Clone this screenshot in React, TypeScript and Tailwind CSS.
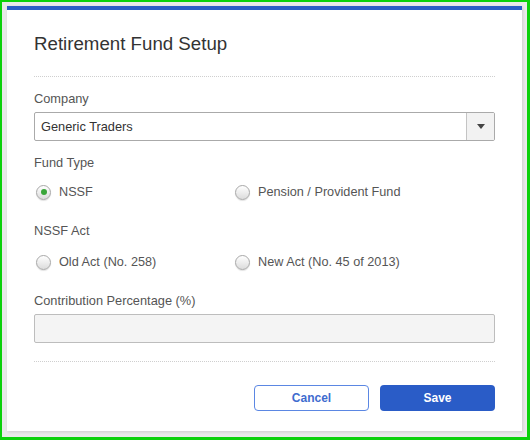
import React from "react";

function Radio({ checked }: { checked?: boolean }) {
  return (
    <span className="relative ml-[2px] inline-flex h-[15px] w-[15px] shrink-0 items-center justify-center rounded-full border border-[#a8a8a8] bg-gradient-to-b from-[#ffffff] to-[#dcdcdc] shadow-[0_1px_1px_rgba(0,0,0,0.12)]">
      {checked && <span className="h-[6px] w-[6px] rounded-full bg-[#3aa63a]" />}
    </span>
  );
}

function RadioItem({ label, checked }: { label: string; checked?: boolean }) {
  return (
    <div className="flex h-[18px] items-center gap-[8px]">
      <Radio checked={checked} />
      <span className="text-[12.7px] leading-[18px] text-[#555]">{label}</span>
    </div>
  );
}

export default function App() {
  return (
    <div
      className="h-[440px] w-[530px] border-b-[3px] border-l-2 border-r-[3px] border-t-2 border-[#0bd10b] bg-[#e9e9e9] pb-[6px] pl-[5px] pr-[5px] pt-[4px]"
      style={{ fontFamily: '"Liberation Sans", Arial, sans-serif' }}
    >
      <div className="flex h-full w-full flex-col bg-white shadow-[1px_1px_3px_rgba(0,0,0,0.12)]">
        <div className="h-[4px] w-full bg-[#2b5ec6]" />
        <div className="flex flex-1 flex-col px-[27px]">
          <h1 className="mt-[22px] text-[18.7px] leading-[24px] text-[#333]">Retirement Fund Setup</h1>
          <div className="mt-[20px] border-t border-dotted border-[#cfcfcf]" />

          <div className="mt-[13px] text-[12.8px] leading-[18px] text-[#555]">Company</div>
          <div className="mt-[4px] flex h-[29px] items-stretch overflow-hidden rounded-[2px] border border-[#aaaaaa] bg-white">
            <div className="flex flex-1 items-center pl-[6px] text-[12.8px] text-[#333]">Generic Traders</div>
            <div className="flex w-[28px] items-center justify-center border-l border-[#c4c4c4] bg-[#f2f2f2]">
              <span className="h-0 w-0 border-l-[4px] border-r-[4px] border-t-[5px] border-l-transparent border-r-transparent border-t-[#444]" />
            </div>
          </div>

          <div className="mt-[13px] text-[12.8px] leading-[18px] text-[#555]">Fund Type</div>
          <div className="mt-[11px] grid grid-cols-[199px_1fr]">
            <RadioItem label="NSSF" checked />
            <RadioItem label="Pension / Provident Fund" />
          </div>

          <div className="mt-[21px] text-[12.8px] leading-[18px] text-[#555]">NSSF Act</div>
          <div className="mt-[13px] grid grid-cols-[199px_1fr]">
            <RadioItem label="Old Act (No. 258)" />
            <RadioItem label="New Act (No. 45 of 2013)" />
          </div>

          <div className="mt-[21px] text-[12.8px] leading-[18px] text-[#555]">Contribution Percentage (%)</div>
          <div className="mt-[4px] h-[29px] rounded-[2px] border border-[#bdbdbd] bg-[#f4f4f4]" />

          <div className="mt-[18px] border-t border-dotted border-[#cfcfcf]" />

          <div className="mt-[23px] flex justify-end gap-[11px]">
            <button className="h-[26px] w-[115px] rounded-[4px] border border-[#5b87e3] bg-white text-[12px] font-bold text-[#3f6ccf]">
              Cancel
            </button>
            <button className="h-[26px] w-[115px] rounded-[4px] bg-[#2a5cc7] text-[12px] font-bold text-white">
              Save
            </button>
          </div>
        </div>
      </div>
    </div>
  );
}
